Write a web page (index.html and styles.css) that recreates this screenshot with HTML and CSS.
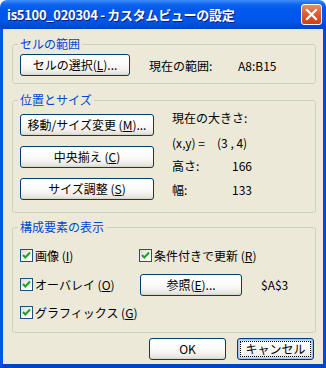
FILE: index.html
```html
<!DOCTYPE html>
<html lang="ja">
<head>
    <meta charset="UTF-8">
    <title>カスタムビューの設定</title>
    <link rel="stylesheet" href="styles.css">
</head>
<body>
    <div class="window">
        <div class="titlebar">
            <span class="title">is5100_020304 - カスタムビューの設定</span>
            <span class="close-btn">
                <svg width="21" height="21" viewBox="0 0 21 21">
                    <path d="M6 6 L15 15 M15 6 L6 15" stroke="#fff" stroke-width="2.2" stroke-linecap="square"/>
                </svg>
            </span>
        </div>

        <div class="client">
            <!-- セルの範囲 -->
            <fieldset class="group group-range">
                <legend>セルの範囲</legend>
                <div class="range-row">
                    <button class="btn btn-select">セルの選択(<u>L</u>)...</button>
                    <span class="range-label">現在の範囲:</span>
                    <span>A8:B15</span>
                </div>
            </fieldset>

            <!-- 位置とサイズ -->
            <fieldset class="group group-pos">
                <legend>位置とサイズ</legend>
                <div class="pos-row">
                    <div class="pos-buttons">
                        <button class="btn">移動/サイズ変更 (<u>M</u>)...</button>
                        <button class="btn">中央揃え (<u>C</u>)</button>
                        <button class="btn">サイズ調整 (<u>S</u>)</button>
                    </div>
                    <div class="pos-info">
                        <div class="info-line line-1">現在の大きさ:</div>
                        <div class="info-line line-2"><span class="key-xy">(x,y) =</span><span>(3 , 4)</span></div>
                        <div class="info-line line-3"><span class="key">高さ:</span><span>166</span></div>
                        <div class="info-line line-4"><span class="key">幅:</span><span>133</span></div>
                    </div>
                </div>
            </fieldset>

            <!-- 構成要素の表示 -->
            <fieldset class="group group-parts">
                <legend>構成要素の表示</legend>
                <div class="parts-grid">
                    <label class="check"><span class="box"><svg width="11" height="11" viewBox="0 0 11 11"><path d="M2 5 L4.3 7.5 L9 2.5" fill="none" stroke="#21a121" stroke-width="2"/></svg></span>画像 (<u>I</u>)</label>
                    <label class="check"><span class="box"><svg width="11" height="11" viewBox="0 0 11 11"><path d="M2 5 L4.3 7.5 L9 2.5" fill="none" stroke="#21a121" stroke-width="2"/></svg></span>条件付きで更新 (<u>R</u>)</label>
                    <label class="check"><span class="box"><svg width="11" height="11" viewBox="0 0 11 11"><path d="M2 5 L4.3 7.5 L9 2.5" fill="none" stroke="#21a121" stroke-width="2"/></svg></span>オーバレイ (<u>O</u>)</label>
                    <div class="ref-row">
                        <button class="btn btn-ref">参照(<u>E</u>)...</button>
                        <span class="ref-value">$A$3</span>
                    </div>
                    <label class="check"><span class="box"><svg width="11" height="11" viewBox="0 0 11 11"><path d="M2 5 L4.3 7.5 L9 2.5" fill="none" stroke="#21a121" stroke-width="2"/></svg></span>グラフィックス (<u>G</u>)</label>
                </div>
            </fieldset>

            <div class="footer">
                <button class="btn btn-footer">OK</button>
                <button class="btn btn-footer btn-default">キャンセル</button>
            </div>
        </div>
    </div>
</body>
</html>
```

FILE: styles.css
```css
body {
    margin: 0;
    background: #fff;
    font-family: "Noto Sans CJK JP", "Liberation Sans", sans-serif;
    font-size: 12px;
    color: #000;
}

.window {
    width: 326px;
    height: 368px;
    box-sizing: border-box;
    display: flex;
    flex-direction: column;
}

.titlebar {
    height: 29px;
    flex: none;
    display: flex;
    align-items: center;
    justify-content: space-between;
    padding: 0 4px 0 7px;
    border-radius: 7px 7px 0 0;
    background: linear-gradient(to bottom, #3d8cf7 0, #2a7cf6 2px, #0a62ec 5px, #0058ee 10px, #0055e8 21px, #004ad9 26px, #0042cc 29px);
}

.title {
    color: #fff;
    font-weight: bold;
    font-size: 13px;
    line-height: 14px;
    letter-spacing: -0.3px;
    text-shadow: 1px 1px 0 #0a1e7a;
    padding-top: 1px;
}

.close-btn {
    width: 21px;
    height: 21px;
    box-sizing: border-box;
    border: 1px solid #fff;
    border-radius: 3px;
    background: linear-gradient(to bottom, #ef8a6a 0, #e2603a 40%, #d54a22 80%, #c8421c 100%);
    display: flex;
    align-items: center;
    justify-content: center;
}

.close-btn svg {
    display: block;
    margin: -1px;
}

.client {
    flex: 1;
    background: #ece9d8;
    border-left: 3px solid #0055e5;
    border-right: 3px solid #0049d8;
    border-bottom: 4px solid #0042c6;
    padding: 9px 7px 0 9px;
}

.group {
    margin: 0;
    border: 1px solid #d0d0bf;
    border-radius: 3px;
    min-width: 0;
}

.group legend {
    color: #0046d5;
    line-height: 12px;
    padding: 0 2px;
    margin-left: -2px;
}

.btn {
    height: 22px;
    padding: 0;
    box-sizing: border-box;
    font-family: inherit;
    font-size: 12px;
    line-height: 18px;
    color: #000;
    border: 1px solid #003c74;
    border-radius: 3px;
    background: linear-gradient(to bottom, #ffffff 0, #fbfbf9 45%, #f2f1ec 75%, #e6e3da 92%, #d6d0c5 100%);
}

/* セルの範囲 */
.group-range {
    padding: 4px 7px 7px 7px;
}

.range-row {
    display: flex;
    align-items: center;
}

.btn-select {
    width: 110px;
}

.range-label {
    width: 89px;
    margin-left: 19px;
}

/* 位置とサイズ */
.group-pos {
    margin-top: 10px;
    padding: 8px 7px 12px 7px;
}

.pos-row {
    display: flex;
}

.pos-buttons {
    width: 134px;
    display: flex;
    flex-direction: column;
    gap: 10px;
}

.pos-info {
    margin-left: 18px;
    line-height: 12px;
}

.info-line {
    display: flex;
}

.line-1 { margin-top: -2px; }
.line-2 { margin-top: 13px; }
.line-3 { margin-top: 11px; }
.line-4 { margin-top: 12px; }

.key-xy {
    width: 45px;
}

.key {
    width: 60px;
}

/* 構成要素の表示 */
.group-parts {
    margin-top: 8px;
    padding: 8px 7px 6px 7px;
}

.parts-grid {
    display: grid;
    grid-template-columns: 119px auto;
    grid-template-rows: 29px 29px 27px;
    align-items: center;
}

.check {
    display: flex;
    align-items: center;
}

.check .box {
    width: 13px;
    height: 13px;
    box-sizing: border-box;
    border: 1px solid #1c5180;
    background: linear-gradient(135deg, #dcdcd7 0, #f6f6f3 60%, #fff 100%);
    margin-right: 2px;
    display: flex;
    align-items: center;
    justify-content: center;
}

.check .box svg {
    display: block;
}

.ref-row {
    display: flex;
    align-items: center;
}

.btn-ref {
    width: 102px;
    margin-left: 1px;
}

.ref-value {
    margin-left: 19px;
}

/* footer */
.footer {
    display: flex;
    justify-content: flex-end;
    gap: 11px;
    margin-top: 5px;
    margin-right: 2px;
}

.btn-footer {
    width: 77px;
}

.btn-default {
    box-shadow: inset 0 0 0 1px #a6c0f0, inset 0 0 0 2px #c4d6f6;
    outline: 1px dotted #000;
    outline-offset: -4px;
}
```
